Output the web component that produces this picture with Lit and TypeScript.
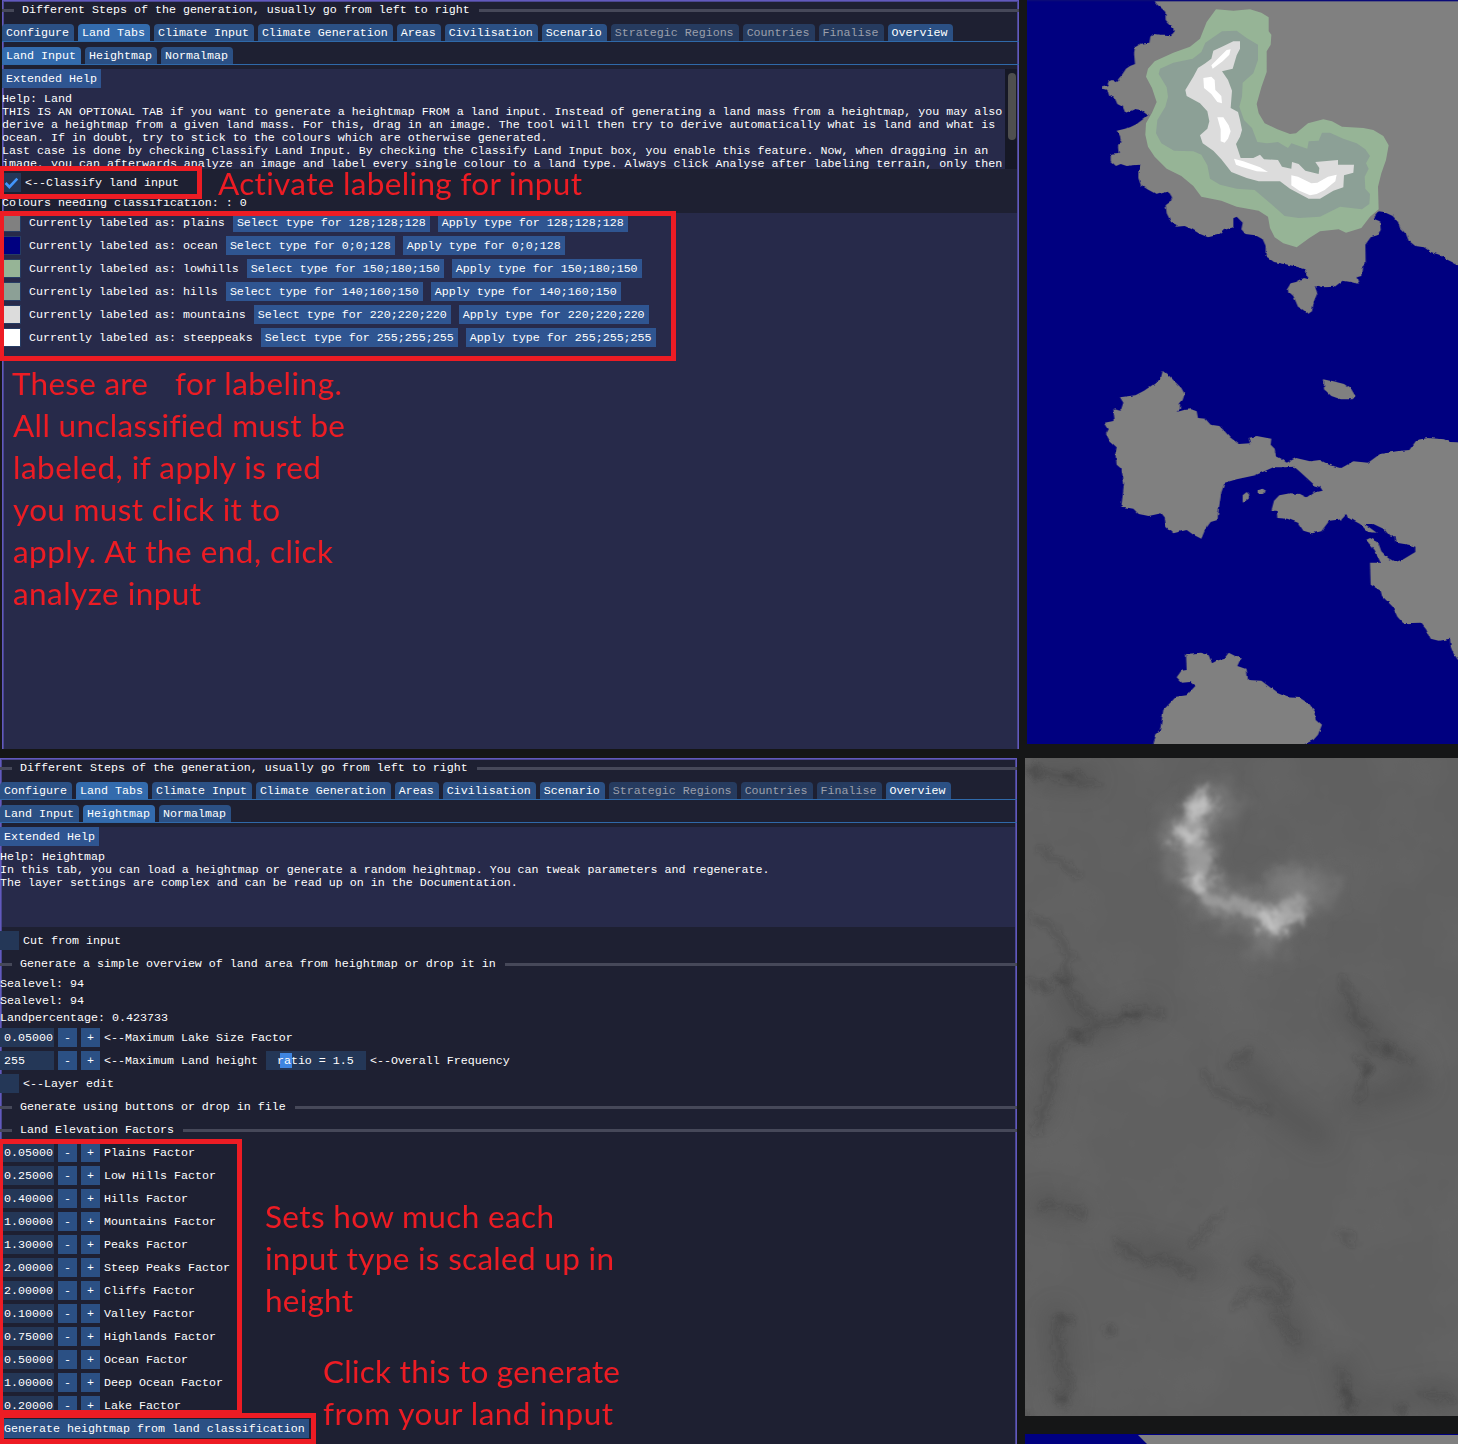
import { LitElement, html, svg, css, nothing } from "lit";
import { customElement, property } from "lit/decorators.js";
import { classMap } from "lit/directives/class-map.js";

const TABS = [
  "Configure", "Land Tabs", "Climate Input", "Climate Generation", "Areas", "Civilisation",
  "Scenario", "Strategic Regions", "Countries", "Finalise", "Overview",
];
const DISABLED = ["Strategic Regions", "Countries", "Finalise"];
const LAND_TABS = ["Land Input", "Heightmap", "Normalmap"];

const CLASSES = [
  { type: "plains", rgb: [128, 128, 128] },
  { type: "ocean", rgb: [0, 0, 128] },
  { type: "lowhills", rgb: [150, 180, 150] },
  { type: "hills", rgb: [140, 160, 150] },
  { type: "mountains", rgb: [220, 220, 220] },
  { type: "steeppeaks", rgb: [255, 255, 255] },
];

const FACTORS = [
  ["0.05000", "Plains Factor"], ["0.25000", "Low Hills Factor"], ["0.40000", "Hills Factor"],
  ["1.00000", "Mountains Factor"], ["1.30000", "Peaks Factor"], ["2.00000", "Steep Peaks Factor"],
  ["2.00000", "Cliffs Factor"], ["0.10000", "Valley Factor"], ["0.75000", "Highlands Factor"],
  ["0.50000", "Ocean Factor"], ["1.00000", "Deep Ocean Factor"], ["0.20000", "Lake Factor"],
];

const base = css`
  * { box-sizing: border-box; }
  :host {
    display: block;
    font: 11.667px/13px "Liberation Mono", monospace;
    color: #fff;
    white-space: pre;
  }
`;

@customElement("section-line")
class SectionLine extends LitElement {
  @property() label = "";
  static styles = [base, css`
    .sep { display: flex; align-items: center; height: 19px; }
    .sep::before, .sep::after { content: ""; height: 3px; background: #464859; margin-top: 2px; }
    .sep::before { width: 12px; margin-right: 8px; }
    .sep::after { flex: 1; margin-left: 9px; }
    .name { padding-top: 2px; }
  `];
  render() { return html`<div class="sep"><span class="name">${this.label}</span></div>`; }
}

@customElement("tab-strip")
class TabStrip extends LitElement {
  @property({ attribute: false }) tabs: string[] = [];
  @property() active = "";
  static styles = [base, css`
    .bar { display: flex; gap: 4px; height: 19px; align-items: flex-end; border-bottom: 1px solid #2f69a9; }
    .tab { height: 17px; padding: 3px 5px 0 4px; background: #2b5084; border-radius: 4px 4px 0 0; }
    .on { background: #336bad; }
    .off { background: #263b5f; color: #9b9fab; }
  `];
  render() {
    return html`<div class="bar">${this.tabs.map(t => html`<div class=${classMap({
      tab: true, on: t === this.active, off: DISABLED.includes(t),
    })}>${t}</div>`)}</div>`;
  }
}

@customElement("number-row")
class NumberRow extends LitElement {
  @property() value = "";
  @property() label = "";
  static styles = [base, css`
    .row { display: flex; gap: 4px; height: 19px; }
    .field { width: 54px; padding: 4px 0 0 4px; background: #243757; overflow: hidden; }
    .step { width: 19px; padding-top: 4px; text-align: center; background: #2b5084; }
    .text { padding-top: 4px; }
  `];
  render() {
    return html`<div class="row"><div class="field">${this.value}</div><div class="step">-</div>
      <div class="step">+</div><div class="text">${this.label}</div><slot></slot></div>`;
  }
}

@customElement("tool-panel")
class ToolPanel extends LitElement {
  @property() active = "";
  static styles = [base, css`
    :host { position: relative; height: 100%; }
    .panel {
      display: flex; flex-direction: column; gap: 4px; height: 100%; overflow: hidden;
      background: #1e2032;
      box-shadow: inset 0 0 0 1px #6259bd, inset 0 0 0 2px #4a4690;
    }
  `];
  render() {
    return html`<div class="panel">
      <section-line label="Different Steps of the generation, usually go from left to right"></section-line>
      <tab-strip .tabs=${TABS} active="Land Tabs"></tab-strip>
      <tab-strip .tabs=${LAND_TABS} active=${this.active}></tab-strip>
      <slot></slot>
    </div>`;
  }
}

const coast = svg`
  <g fill="#808080" filter="url(#rough)">
    <path d="M405 -60 L405 5 412 14 428 28 436 36 437 60 448 72 460 82 461 98 452 106 437 104 420 104 400 102 391 110 388 128 362 131 345 142 342 160 345 192 330 198 318 206 306 224 296 236 288 247 276 240 266 244 262 256 248 258 247 266 262 270 268 288 284 294 292 312 308 320 316 338 330 334 344 327 362 330 384 346 374 354 350 372 330 382 312 387 290 392 300 408 302 420 294 440 296 462 272 464 272 484 288 498 302 492 320 498 340 496 360 494 355 512 355 534 362 554 382 568 408 582 428 576 444 572 456 592 450 606 437 616 440 640 452 664 468 680 494 678 516 688 540 702 564 712 596 704 612 690 640 682 640 655 650 650 668 668 664 688 676 702 706 706 728 718 737 738 737 768 762 786 794 792 830 800 856 808 866 838 852 834 828 846 812 850 800 870 820 888 834 920 850 930 864 942 876 934 882 904 892 880 884 856 908 862 944 860 968 842 992 846 1016 852 1010 832 1024 828 1026 802 1037 790 1036 734 1052 712 1072 706 1082 690 1080 664 1060 656 1076 634 1092 636 1118 648 1134 666 1140 684 1158 702 1166 722 1186 738 1212 742 1232 756 1258 764 1276 776 1296 786 1314 796 1350 810 1350 -60Z"/>
    <g transform="translate(0,1080)">
      <path d="M428 33 L448 48 468 68 484 84 494 102 488 120 480 130 480 146 470 156 492 150 514 148 530 154 534 174 556 176 572 194 598 198 614 214 630 232 656 252 690 250 686 234 710 228 754 236 752 254 764 266 768 288 784 296 800 308 828 294 870 304 900 300 930 316 964 324 1000 304 1044 308 1080 282 1130 274 1168 270 1190 240 1224 234 1272 238 1290 246 1350 248 1350 930 1314 900 1300 880 1292 860 1290 836 1256 842 1232 836 1218 808 1202 788 1150 790 1132 770 1118 740 1086 708 1082 692 1052 674 1050 608 1082 608 1064 570 1038 540 1050 534 1074 546 1084 574 1104 594 1126 606 1150 598 1186 576 1186 560 1166 554 1130 548 1126 528 1112 530 1090 506 1060 492 1034 492 1070 518 1044 516 1020 492 1002 482 976 466 966 478 928 482 904 514 876 520 850 512 834 488 802 476 772 474 770 452 754 452 762 422 778 406 810 400 840 402 860 412 880 398 908 392 900 380 884 376 838 334 822 320 796 322 760 322 728 336 706 346 650 358 614 368 604 398 598 436 592 480 572 486 556 508 544 536 520 524 500 510 460 520 438 500 434 472 424 460 386 468 356 462 340 446 304 440 308 406 312 370 304 326 290 314 286 282 290 262 270 244 258 222 266 208 254 188 284 182 280 148 302 152 310 128 300 112 346 106 372 92 402 72 422 56Z"/>
      <path d="M912 58 L940 64 972 72 994 88 1006 108 998 118 962 118 934 108 912 88Z"/>
      <path d="M668 406 L680 396 688 404 686 416 668 428Z M716 390 L728 386 740 394 728 402 716 402Z"/>
      <path d="M498 882 L540 878 566 886 576 910 590 902 612 896 626 878 662 896 652 918 680 928 684 960 724 962 748 980 770 998 802 1012 840 1014 868 1032 886 1056 890 1080 906 1094 894 1124 880 1140 850 1154 840 1190 400 1190 400 1154 408 1124 420 1112 430 1050 468 1010 500 1006 526 978 510 966 486 968 470 952 484 932 500 930Z"/>
    </g>
  </g>`;

const ridges = svg`
  <path fill="#96b496" d="M588 28 L640 32 690 28 724 38 746 52 746 94 754 104 752 134 740 154 740 216 724 262 710 312 716 340 734 370 772 388 810 402 828 400 864 370 910 358 936 364 966 380 1030 384 1060 390 1090 408 1106 436 1098 480 1084 520 1074 560 1076 628 1050 650 1024 684 978 698 956 688 900 694 868 714 830 742 790 730 764 712 750 684 744 650 716 632 650 620 604 602 544 590 520 558 484 528 440 506 404 470 384 440 376 404 378 370 396 338 410 306 396 264 378 230 384 206 404 184 460 158 510 140 540 116 560 66Z"/>
  <path fill="#8ca096" d="M606 94 L650 92 680 114 714 134 714 180 700 220 668 248 666 290 658 320 672 360 696 384 712 426 740 430 774 426 804 444 814 430 862 446 866 424 896 422 906 398 930 398 970 416 1010 430 1036 448 1050 468 1038 490 1046 506 1034 530 1036 566 1050 582 1048 612 1026 628 960 620 900 650 836 654 794 648 756 614 704 570 650 566 600 554 570 536 562 496 544 464 520 454 462 452 424 430 408 400 412 360 436 320 444 290 440 262 416 222 420 206 460 188 518 176 544 156 556 128Z"/>
  <path fill="#dcdcdc" d="M640 124 L660 124 660 146 650 166 638 206 606 214 624 240 636 272 632 324 654 336 660 360 666 390 660 410 648 432 662 474 700 474 720 464 732 478 774 480 786 500 814 506 816 486 836 492 856 512 896 522 898 504 886 486 954 480 954 494 1002 494 1000 518 972 526 970 562 940 572 900 596 866 596 810 566 780 544 716 544 680 534 634 516 604 478 580 452 548 430 540 406 562 386 568 364 562 334 540 310 500 288 496 270 520 230 534 204 556 190 574 176 580 152 606 140Z"/>
  <path fill="#fff" d="M620 150 L632 148 628 164 608 184 578 206 574 196 598 172Z M550 234 L574 230 584 240 586 270 604 288 606 310 592 306 574 282 552 264Z M592 352 L610 352 626 376 632 394 624 416 614 428 602 424 602 388Z M642 476 L670 484 720 502 744 516 710 514 664 500 648 494Z M814 526 L834 530 874 550 892 548 924 530 950 524 946 544 914 570 890 582 870 586 838 572 814 556Z"/>`;

@customElement("terrain-map")
class TerrainMap extends LitElement {
  static styles = css`:host, svg { display: block; }`;
  render() {
    return html`<svg width="431" height="744" viewBox="21 0 1293 2232">
      <defs><filter id="rough" x="0" y="0" width="1" height="1">
        <feTurbulence type="fractalNoise" baseFrequency="0.06" numOctaves="2" seed="4"/>
        <feDisplacementMap in="SourceGraphic" scale="9" xChannelSelector="R" yChannelSelector="G"/>
      </filter></defs>
      <rect x="21" width="1293" height="2232" fill="#000080"/>
      ${coast}${ridges}
      <rect x="21" width="1293" height="4" fill="#0a0a78"/>
    </svg>`;
  }
}

@customElement("height-map")
class HeightMap extends LitElement {
  static styles = css`:host { flex: none; } :host, svg { display: block; }`;
  render() {
    return html`<svg width="433" height="658" viewBox="15 24 1299 1974">
      <defs>
        <filter id="cloud" x="-30%" y="-30%" width="160%" height="160%">
          <feTurbulence type="fractalNoise" baseFrequency="0.022" numOctaves="4" seed="8" result="n"/>
          <feGaussianBlur in="SourceGraphic" stdDeviation="12" result="b"/>
          <feDisplacementMap in="b" in2="n" scale="60" xChannelSelector="R" yChannelSelector="G"/>
          <feGaussianBlur stdDeviation="2.5"/>
        </filter>
        <filter id="wide" x="-50%" y="-50%" width="200%" height="200%">
          <feTurbulence type="fractalNoise" baseFrequency="0.015" numOctaves="4" seed="3" result="n"/>
          <feGaussianBlur in="SourceGraphic" stdDeviation="28" result="b"/>
          <feDisplacementMap in="b" in2="n" scale="80" xChannelSelector="R" yChannelSelector="G"/>
          <feGaussianBlur stdDeviation="4"/>
        </filter>
        <filter id="crack" filterUnits="userSpaceOnUse" x="-100" y="-100" width="1500" height="2200">
          <feTurbulence type="fractalNoise" baseFrequency="0.03" numOctaves="3" seed="12" result="n"/>
          <feGaussianBlur in="SourceGraphic" stdDeviation="9" result="b"/>
          <feDisplacementMap in="b" in2="n" scale="45" xChannelSelector="R" yChannelSelector="G"/>
          <feGaussianBlur stdDeviation="3"/>
        </filter>
        <filter id="shade" filterUnits="userSpaceOnUse" x="-100" y="-100" width="1600" height="2300">
          <feGaussianBlur stdDeviation="34"/>
        </filter>
        <filter id="grain" x="0" y="0" width="1" height="1">
          <feTurbulence type="fractalNoise" baseFrequency="0.004" numOctaves="4" seed="21"/>
          <feColorMatrix values="0 0 0 0 0.2  0 0 0 0 0.2  0 0 0 0 0.2  0.9 0 0 0 -0.34"/>
        </filter>
      </defs>
      <rect x="15" y="24" width="1299" height="1974" fill="#606060"/>
      <rect x="15" y="24" width="1299" height="1974" filter="url(#grain)" opacity=".4"/>
      <g filter="url(#shade)" fill="none" stroke="#404040" stroke-linecap="round" opacity=".28">
        <path stroke-width="70" d="M60 80 L200 90 M120 700 L200 850 380 780 M60 1100 L100 900 M680 930 L760 1060 900 1160 M980 760 L1080 900 1180 930 M1000 1060 L1200 1000 M60 1360 L180 1390 M310 1480 L560 1560 M700 1520 L800 1680 840 1780 M110 1700 L130 1960 M960 1850 L1000 1980 1280 1930"/>
      </g>
      <g filter="url(#wide)" fill="none" stroke="#8c8c8c" stroke-linecap="round" stroke-linejoin="round" opacity=".55">
        <path d="M590 160 L490 260 540 390 600 450 760 500 830 420 880 430" stroke-width="120"/>
        <path d="M730 590 L760 560 M780 390 L900 400" stroke-width="70"/>
      </g>
      <g filter="url(#cloud)" fill="none" stroke-linecap="round" stroke-linejoin="round">
        <path d="M548 160 L505 250 545 330 535 385" stroke="#9a9a9a" stroke-width="80"/>
        <path d="M535 400 L590 462 660 460 730 500" stroke="#9a9a9a" stroke-width="50"/>
        <path d="M730 500 L775 520 820 480 830 460" stroke="#a8a8a8" stroke-width="66"/>
        <path d="M550 158 L525 190 M475 255 L525 260 M530 400 L535 385 M735 500 L780 535" stroke="#c4c4c4" stroke-width="36"/>
        <path d="M840 460 L850 400 770 390" stroke="#808080" stroke-width="44" opacity=".6"/>
      </g>
      <g filter="url(#crack)" fill="none" stroke="#363636" stroke-linecap="round" stroke-linejoin="round">
        <path opacity=".6" stroke-width="16" d="M20 62 L60 66 M140 80 L165 76 M66 704 L84 716 M115 690 L135 700 M310 798 L355 780 M150 855 L195 860 M1090 885 L1110 900 M1036 950 L1044 975 M120 1700 L150 1710 M267 1732 L273 1745 M970 1915 L990 1980 M115 1935 L130 1955 M1145 1970 L1150 1980 M15 1990 L18 1994"/>
        <path opacity=".32" stroke-width="13" d="M60 66 L160 90 230 105 M30 500 L70 520 120 560 150 620 130 700 200 790 240 830 M20 690 L60 700 M180 860 L110 890 90 1010 70 1100 40 1150 M200 840 L300 800 430 790 M960 690 L990 730 1000 800 1050 840 M1050 885 L1170 930 M1010 920 L1040 960 1020 1040 M640 940 L690 900 M550 970 L600 1030 690 1070 740 1080 M60 300 L110 330 180 380"/>
        <path opacity=".3" stroke-width="15" d="M60 1370 L110 1360 M150 1380 L190 1390 M290 1480 L370 1530 450 1530 510 1570 M520 1480 L600 1400 M690 1530 L790 1590 M640 1670 L700 1620 790 1660 800 1600 M770 1690 L830 1780 M110 1710 L120 1850 150 1890 130 1950 M960 1860 L985 1960 M1210 1930 L1290 1950 M960 1450 L1000 1480"/>
      </g>
    </svg>`;
  }
}

@customElement("note-layer")
class NoteLayer extends LitElement {
  static styles = css`
    :host { position: absolute; inset: 0; pointer-events: none; }
    svg { display: block; }
    .box { fill: none; stroke: #ed1c24; stroke-width: 5; }
    .note { fill: #ed1c24; font: 31.5px Lato, sans-serif; font-variant-ligatures: none; white-space: pre; }
  `;
  line(x: number, y: number, w: number, t: string) {
    return svg`<text class="note" x=${x} y=${y} textLength=${w}>${t}</text>`;
  }
  render() {
    return html`<svg width="1458" height="1444" viewBox="0 0 1458 1444">
      <rect class="box" x="1.5" y="168.5" width="198" height="28"/>
      <rect class="box" x="1.5" y="213.5" width="672" height="145"/>
      <rect class="box" x="0.5" y="1141.5" width="239" height="271"/>
      <rect class="box" x="1.5" y="1415.5" width="312" height="26"/>
      ${this.line(218, 195, 364, "Activate labeling for input")}
      ${this.line(12, 395, 136, "These are")}
      ${this.line(175, 395, 167, "for labeling.")}
      ${this.line(13, 437, 332, "All unclassified must be")}
      ${this.line(13, 479, 308, "labeled, if apply is red")}
      ${this.line(13, 521, 267, "you must click it to")}
      ${this.line(13, 563, 320, "apply. At the end, click")}
      ${this.line(13, 605, 188, "analyze input")}
      ${this.line(265, 1228, 289, "Sets how much each")}
      ${this.line(265, 1270, 349, "input type is scaled up in")}
      ${this.line(265, 1312, 88, "height")}
      ${this.line(323, 1383, 297, "Click this to generate")}
      ${this.line(323, 1425, 290, "from your land input")}
    </svg>`;
  }
}

@customElement("app-root")
class AppRoot extends LitElement {
  static styles = [base, css`
    :host { position: relative; width: 1458px; height: 1444px; overflow: hidden; background: #151617; }
    .page { display: flex; flex-direction: column; gap: 9px; height: 100%; white-space: normal; }
    .row { display: flex; gap: 8px; }
    .first { height: 749px; padding-left: 2px; overflow: hidden; }
    .second { height: 686px; }
    tool-panel { width: 1017px; flex: none; }
    .first tool-panel { height: 760px; }
    .second tool-panel { height: 700px; }
    .side { display: flex; flex-direction: column; gap: 18px; }
    .strip { display: block; flex: none; }
    .help, .list {
      background: linear-gradient(#272a4a, #272a4a) 2px 0 / calc(100% - 4px) 100% no-repeat;
      white-space: pre;
    }
    .help { height: 100px; flex: none; display: flex; overflow: hidden; padding-right: 2px; }
    .copy { flex: 1; display: flex; flex-direction: column; gap: 4px; align-items: flex-start; min-width: 0; }
    .copy .btn { flex: none; }
    .words { padding-top: 1px; }
    .track { width: 12px; background: #161826; padding: 4px 1px 0 3px; }
    .thumb { height: 67px; width: 8px; border-radius: 4px; background: #4f4f4f; }
    .list { flex: 1; display: flex; flex-direction: column; gap: 4px; }
    .item { display: flex; gap: 8px; height: 19px; white-space: pre; }
    .swatch { width: 19px; border: 1px solid #263c64; }
    .label { padding-top: 4px; }
    .btn { height: 19px; padding: 4px 4px 0; background: #2f5591; white-space: pre; }
    .go { background: #2b5084; align-self: flex-start; }
    .check { display: flex; gap: 4px; height: 19px; white-space: pre; }
    .tick { width: 19px; height: 19px; background: #243757; }
    .text { height: 13px; padding-top: 1px; white-space: pre; }
    .slider { display: flex; width: 100px; height: 19px; margin-left: 4px; padding: 4px 0 0 11px; position: relative; background: #243757; }
    .grab { position: absolute; left: 14px; top: 2px; width: 12px; height: 15px; background: #3f85e0; }
    .over { position: relative; }
    .inline { padding-top: 4px; white-space: pre; }
  `];

  check(label: string, on = false) {
    return html`<div class="check"><svg class="tick" viewBox="0 0 19 19">${on
      ? svg`<path d="M3.6 10 L7.4 14 L15.3 5.6" fill="none" stroke="#4296fa" stroke-width="2.6"/>` : nothing}</svg><div class="label">${label}</div></div>`;
  }

  render() {
    const landHelp = `Help: Land
THIS IS AN OPTIONAL TAB if you want to generate a heightmap FROM a land input. Instead of generating a land mass from a heightmap, you may also
derive a heightmap from a given land mass. For this, drag in an image. The tool will then try to derive automatically what is land and what is
ocean. If in doubt, try to stick to the colours which are otherwise generated.
Last case is done by checking Classify Land Input. By checking the Classify Land Input box, you enable this feature. Now, when dragging in an
image, you can afterwards analyze an image and label every single colour to a land type. Always click Analyse after labeling terrain, only then`;
    const heightHelp = `Help: Heightmap
In this tab, you can load a heightmap or generate a random heightmap. You can tweak parameters and regenerate.
The layer settings are complex and can be read up on in the Documentation.`;
    return html`<div class="page">
      <div class="row first">
        <tool-panel active="Land Input">
          <div class="help">
            <div class="copy"><div class="btn">Extended Help</div><div class="words">${landHelp}</div></div>
            <div class="track"><div class="thumb"></div></div>
          </div>
          ${this.check("<--Classify land input", true)}
          <div class="text">Colours needing classification: : 0</div>
          <div class="list">${CLASSES.map(c => html`<div class="item"><div class="swatch" style="background:rgb(${c.rgb.join(",")})"></div><div class="label">Currently labeled as: ${c.type}</div><div class="btn">Select type for ${c.rgb.join(";")}</div><div class="btn">Apply type for ${c.rgb.join(";")}</div></div>`)}</div>
        </tool-panel>
        <terrain-map></terrain-map>
      </div>
      <div class="row second">
        <tool-panel active="Heightmap">
          <div class="help"><div class="copy"><div class="btn">Extended Help</div><div class="words">${heightHelp}</div></div></div>
          ${this.check("Cut from input")}
          <section-line label="Generate a simple overview of land area from heightmap or drop it in"></section-line>
          <div class="text">Sealevel: 94</div>
          <div class="text">Sealevel: 94</div>
          <div class="text">Landpercentage: 0.423733</div>
          <number-row value="0.05000" label="<--Maximum Lake Size Factor"></number-row>
          <number-row value="255" label="<--Maximum Land height"><div class="slider"><div class="grab"></div><span class="over">ratio = 1.5</span></div><div class="inline">&lt;--Overall Frequency</div></number-row>
          ${this.check("<--Layer edit")}
          <section-line label="Generate using buttons or drop in file"></section-line>
          <section-line label="Land Elevation Factors"></section-line>
          ${FACTORS.map(([v, l]) => html`<number-row value=${v} label=${l}></number-row>`)}
          <div class="btn go">Generate heightmap from land classification</div>
        </tool-panel>
        <div class="side">
          <height-map></height-map>
          <svg class="strip" width="433" height="20" viewBox="0 0 433 20"><rect width="433" height="20" fill="#000080"/><path d="M113 1H433V20H130L122 10L117 5Z" fill="#808080"/></svg>
        </div>
      </div>
    </div>
    <note-layer></note-layer>`;
  }
}
